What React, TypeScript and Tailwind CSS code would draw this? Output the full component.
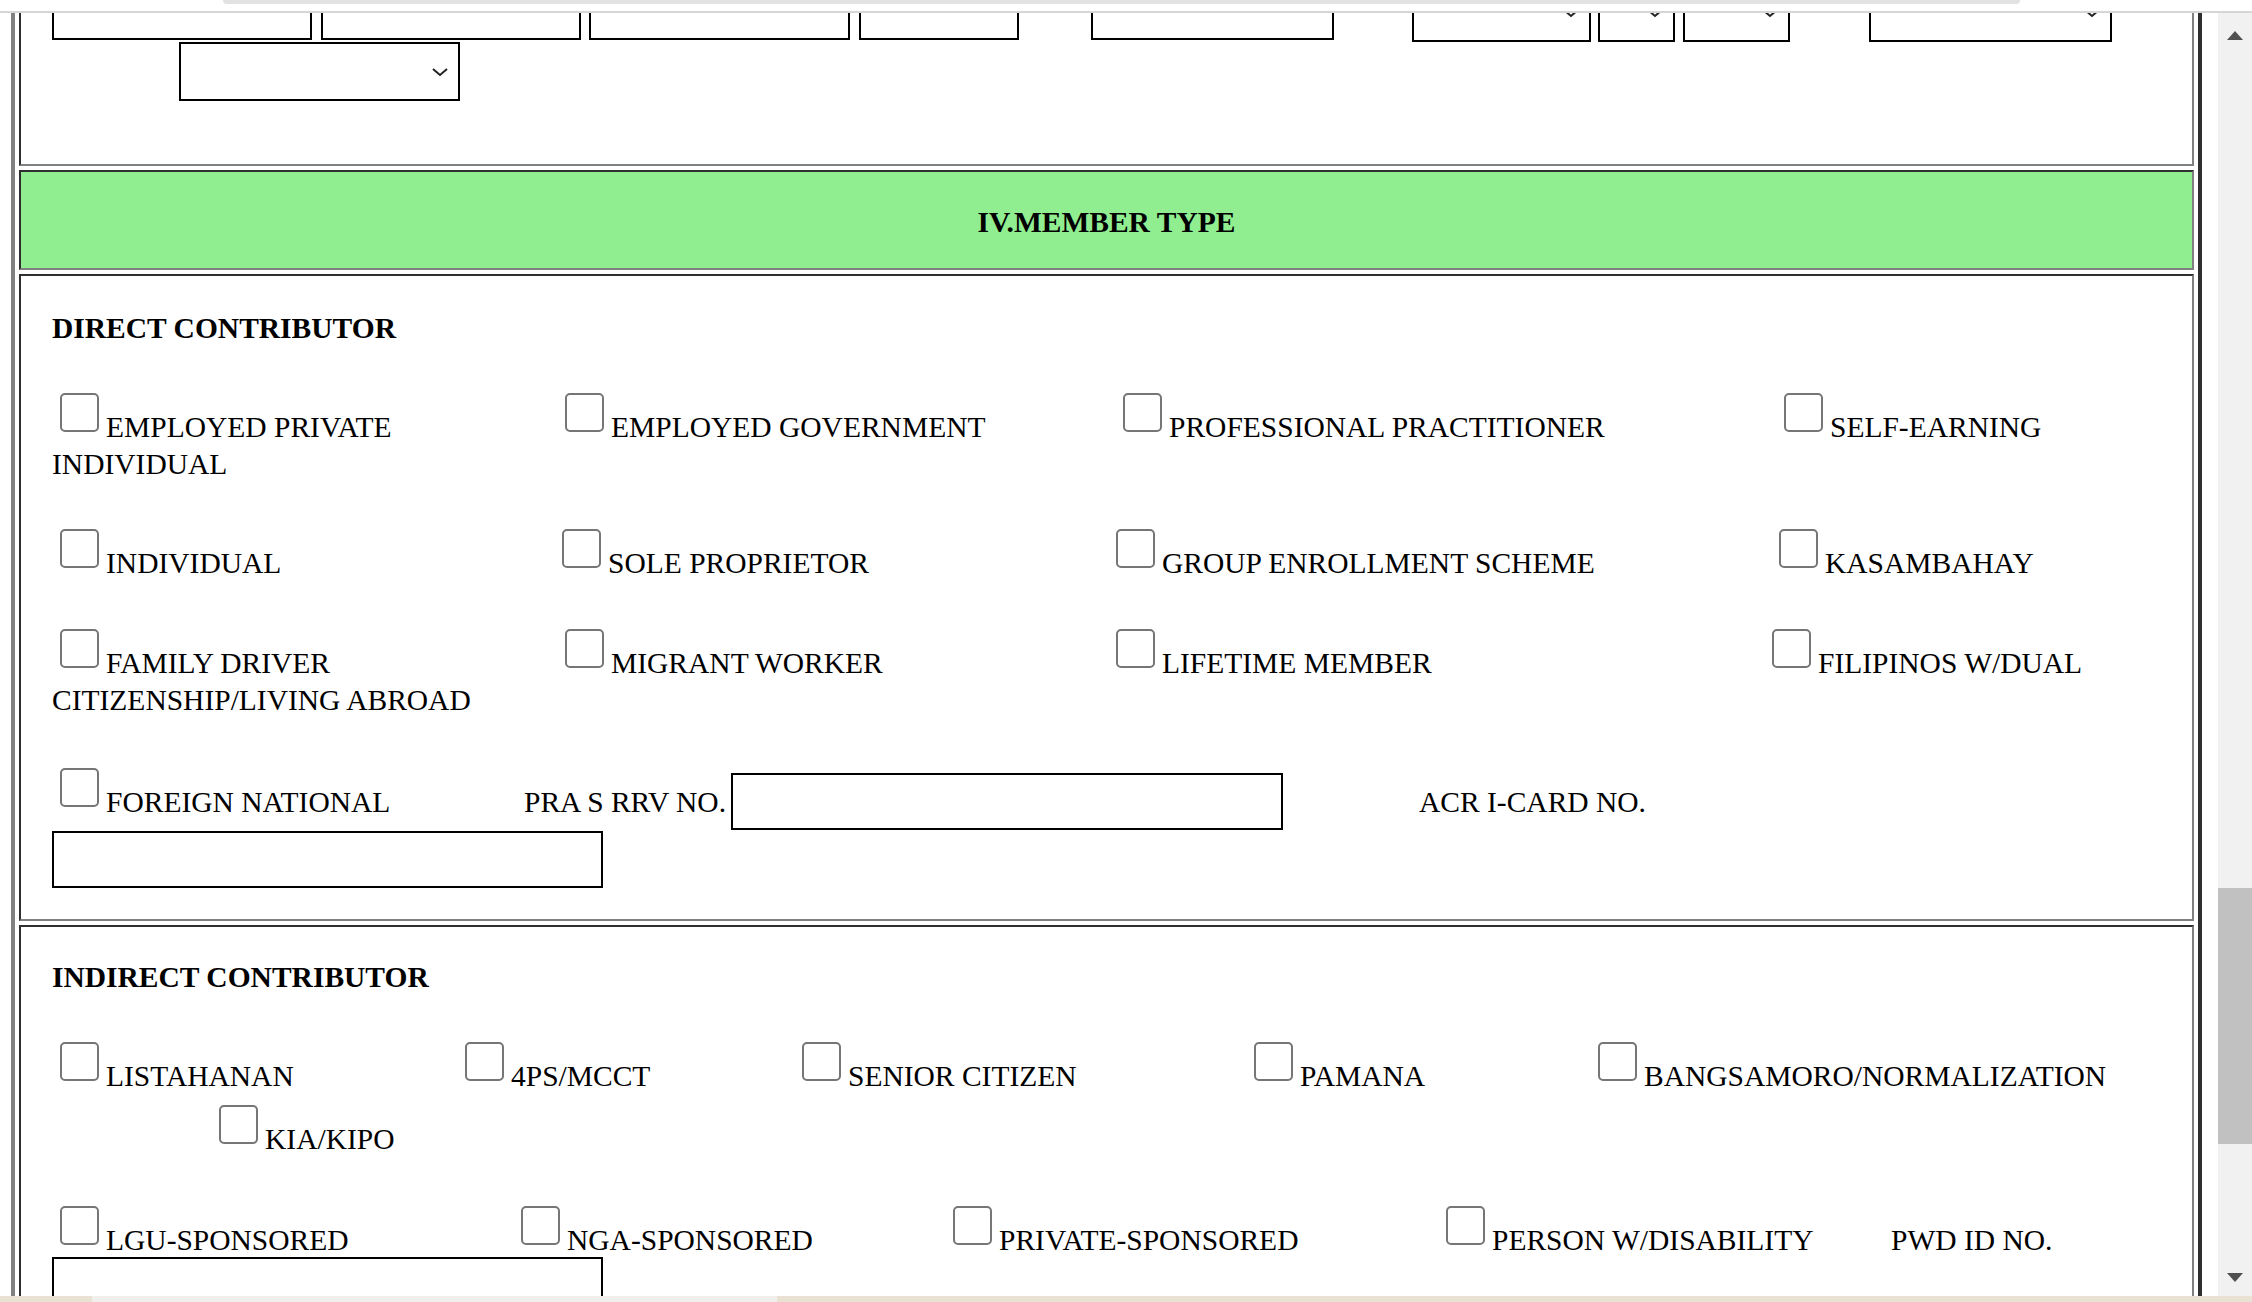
import React from "react";

const cell =
  "border-2 border-t-[#2f2f2f] border-l-[#2f2f2f] border-b-[#808080] border-r-[#808080] bg-white pl-[31px]";

function Box() {
  return <span className="block h-[39px] w-[39px] shrink-0 rounded-[5px] border-2 border-[#767676] bg-white" />;
}

function Check({ label, className = "" }: { label: string; className?: string }) {
  return (
    <div className={`flex shrink-0 items-start ${className}`}>
      <Box />
      <span className="ml-[7px] mt-[18px] whitespace-nowrap leading-[32px]">{label}</span>
    </div>
  );
}

function Chevron({ className = "" }: { className?: string }) {
  return (
    <svg className={className} width="18" height="10" viewBox="0 0 18 10" fill="none">
      <path d="M2 2l7 6 7-6" stroke="#222" strokeWidth="2" />
    </svg>
  );
}

function Select({ className = "" }: { className?: string }) {
  return (
    <div className={`relative flex shrink-0 items-center justify-end border-2 border-black bg-white pr-[9px] ${className}`}>
      <Chevron />
    </div>
  );
}

function Field({ className = "" }: { className?: string }) {
  return <div className={`shrink-0 border-2 border-black bg-white ${className}`} />;
}

export default function App() {
  return (
    <div className="flex h-[1302px] w-[2252px] flex-col overflow-hidden bg-white font-['Liberation_Serif',serif] text-[29.5px] text-black">
      {/* browser chrome edge */}
      <div className="h-[13px] shrink-0 border-b-2 border-[#d6d6d6]">
        <div className="ml-[223px] h-[4px] w-[1797px] rounded-b-full bg-[#e2e2e2]" />
      </div>

      <div className="flex min-h-0 flex-1">
        <div className="min-w-0 flex-1 overflow-hidden">
          <div className="-mt-[53px] ml-[11px] flex w-[2191px] flex-col gap-[4px] border-4 border-t-[#808080] border-l-[#808080] border-b-[#2f2f2f] border-r-[#2f2f2f] p-[4px]">
            {/* end of section III */}
            <div className={`${cell} pb-[63px] pt-[13px]`}>
              <div className="flex items-start">
                <Field className="h-[57px] w-[260px]" />
                <Field className="ml-[9px] h-[57px] w-[260px]" />
                <Field className="ml-[8px] h-[57px] w-[261px]" />
                <Field className="ml-[9px] h-[57px] w-[160px]" />
                <Field className="ml-[72px] h-[57px] w-[243px]" />
                <Select className="ml-[78px] h-[59px] w-[179px]" />
                <Select className="ml-[7px] h-[59px] w-[77px]" />
                <Select className="ml-[8px] h-[59px] w-[107px]" />
                <Select className="ml-[79px] h-[59px] w-[243px]" />
              </div>
              <Select className="ml-[127px] h-[59px] w-[281px]" />
            </div>

            {/* header */}
            <div className="h-[100px] border-2 border-t-[#2f2f2f] border-l-[#2f2f2f] border-b-[#808080] border-r-[#808080] bg-[#90ee90] pt-[34px] text-center font-bold leading-[32px]">
              IV.MEMBER TYPE
            </div>

            {/* direct contributor */}
            <div className={`${cell} pb-[31px] pt-[36px]`}>
              <div className="font-bold leading-[32px]">DIRECT CONTRIBUTOR</div>
              <div className="mt-[49px] flex items-start pl-[8px]">
                <Check label="EMPLOYED PRIVATE" className="w-[505px]" />
                <Check label="EMPLOYED GOVERNMENT" className="w-[558px]" />
                <Check label="PROFESSIONAL PRACTITIONER" className="w-[661px]" />
                <Check label="SELF-EARNING" />
              </div>
              <div className="mt-[5px] leading-[32px]">INDIVIDUAL</div>
              <div className="mt-[49px] flex items-start pl-[8px]">
                <Check label="INDIVIDUAL" className="w-[502px]" />
                <Check label="SOLE PROPRIETOR" className="w-[554px]" />
                <Check label="GROUP ENROLLMENT SCHEME" className="w-[663px]" />
                <Check label="KASAMBAHAY" />
              </div>
              <div className="mt-[50px] flex items-start pl-[8px]">
                <Check label="FAMILY DRIVER" className="w-[505px]" />
                <Check label="MIGRANT WORKER" className="w-[551px]" />
                <Check label="LIFETIME MEMBER" className="w-[656px]" />
                <Check label="FILIPINOS W/DUAL" />
              </div>
              <div className="mt-[5px] leading-[32px]">CITIZENSHIP/LIVING ABROAD</div>
              <div className="mt-[52px] flex items-start pl-[8px]">
                <Check label="FOREIGN NATIONAL" className="w-[464px]" />
                <span className="mt-[18px] w-[207px] shrink-0 whitespace-nowrap leading-[32px]">PRA S RRV NO.</span>
                <Field className="mt-[5px] h-[57px] w-[552px]" />
                <span className="ml-[136px] mt-[18px] whitespace-nowrap leading-[32px]">ACR I-CARD NO.</span>
              </div>
              <Field className="mt-[1px] h-[57px] w-[551px]" />
            </div>

            {/* indirect contributor */}
            <div className={`${cell} pb-[80px] pt-[34px]`}>
              <div className="font-bold leading-[32px]">INDIRECT CONTRIBUTOR</div>
              <div className="mt-[49px] flex items-start pl-[8px]">
                <Check label="LISTAHANAN" className="w-[405px]" />
                <Check label="4PS/MCCT" className="w-[337px]" />
                <Check label="SENIOR CITIZEN" className="w-[452px]" />
                <Check label="PAMANA" className="w-[344px]" />
                <Check label="BANGSAMORO/NORMALIZATION" />
              </div>
              <div className="mt-[13px] flex items-start pl-[167px]">
                <Check label="KIA/KIPO" />
              </div>
              <div className="mt-[51px] flex items-start pl-[8px]">
                <Check label="LGU-SPONSORED" className="w-[461px]" />
                <Check label="NGA-SPONSORED" className="w-[432px]" />
                <Check label="PRIVATE-SPONSORED" className="w-[493px]" />
                <Check label="PERSON W/DISABILITY" className="w-[445px]" />
                <span className="mt-[18px] whitespace-nowrap leading-[32px]">PWD ID NO.</span>
              </div>
              <Field className="mt-[1px] h-[57px] w-[551px]" />
            </div>
          </div>
        </div>

        {/* scrollbar */}
        <div className="flex w-[34px] shrink-0 flex-col bg-[#f1f1f1]">
          <div className="flex h-[36px] items-center justify-center pt-[8px]">
            <svg width="16" height="9" viewBox="0 0 16 9">
              <path d="M8 0L16 9H0z" fill="#505050" />
            </svg>
          </div>
          <div className="mt-[839px] h-[256px] bg-[#c1c1c1]" />
          <div className="flex flex-1 items-end justify-center pb-[14px]">
            <svg width="16" height="9" viewBox="0 0 16 9">
              <path d="M0 0h16L8 9z" fill="#505050" />
            </svg>
          </div>
        </div>
      </div>

      {/* taskbar edge */}
      <div className="flex h-[6px] shrink-0 bg-[#e9e2d2]">
        <div className="ml-[92px] w-[685px] bg-[#f0efec]" />
      </div>
    </div>
  );
}
